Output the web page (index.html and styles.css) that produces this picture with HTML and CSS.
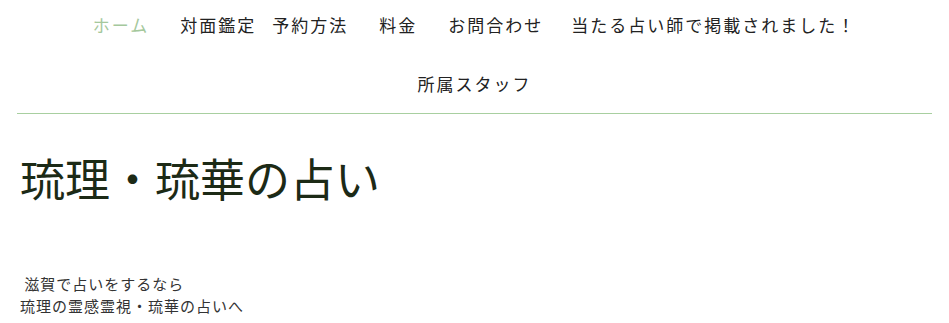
FILE: index.html
```html
<!DOCTYPE html>
<html lang="ja">
<head>
    <meta charset="UTF-8">
    <meta name="viewport" content="width=device-width, initial-scale=1.0">
    <title>琉理・琉華の占い</title>
    <link rel="stylesheet" href="styles.css">
</head>
<body>
    <header class="site-header">
        <nav class="main-nav">
            <a href="#" class="current">ホーム</a>
            <a href="#" class="tight-right">対面鑑定</a>
            <a href="#" class="tight-left wide-right">予約方法</a>
            <a href="#">料金</a>
            <a href="#" class="wide-left">お問合わせ</a>
            <a href="#">当たる占い師で掲載されました！</a>
            <a href="#">所属スタッフ</a>
        </nav>
    </header>

    <div class="content">
        <h1 class="site-title">琉理・琉華の占い</h1>
        <p class="intro">&nbsp;滋賀で占いをするなら<br>琉理の霊感霊視・琉華の占いへ</p>
    </div>
</body>
</html>
```

FILE: styles.css
```css
body {
    font-family: "Noto Sans CJK JP", sans-serif;
    margin: 0;
    padding: 0;
    background-color: #fff;
    color: #333;
}

.site-header {
    margin: 0 17px;
    border-bottom: 1px solid #a8cfa0;
}

.main-nav {
    display: flex;
    flex-wrap: wrap;
    justify-content: center;
    row-gap: 5px;
    padding: 0 60px;
}

.main-nav a {
    display: block;
    padding: 5px 14px 10px;
    line-height: 39px;
    font-size: 17px;
    letter-spacing: 2px;
    color: #222;
    text-decoration: none;
}

.main-nav a.current {
    color: #a5c89c;
}

/* spacing between items is uneven in the original menu */
.main-nav a.tight-right {
    padding-left: 17px;
    padding-right: 8px;
}

.main-nav a.tight-left {
    padding-left: 8px;
}

.main-nav a.wide-right {
    padding-right: 17px;
}

.main-nav a.wide-left {
    padding-left: 17px;
}

.content {
    padding: 0 20px;
}

.site-title {
    margin: 32px 0 0;
    font-size: 45px;
    font-weight: normal;
    line-height: 64px;
    color: #1c2a16;
}

.intro {
    margin: 63px 0 0;
    font-size: 15px;
    line-height: 22px;
    letter-spacing: 1px;
    color: #333;
}
```
